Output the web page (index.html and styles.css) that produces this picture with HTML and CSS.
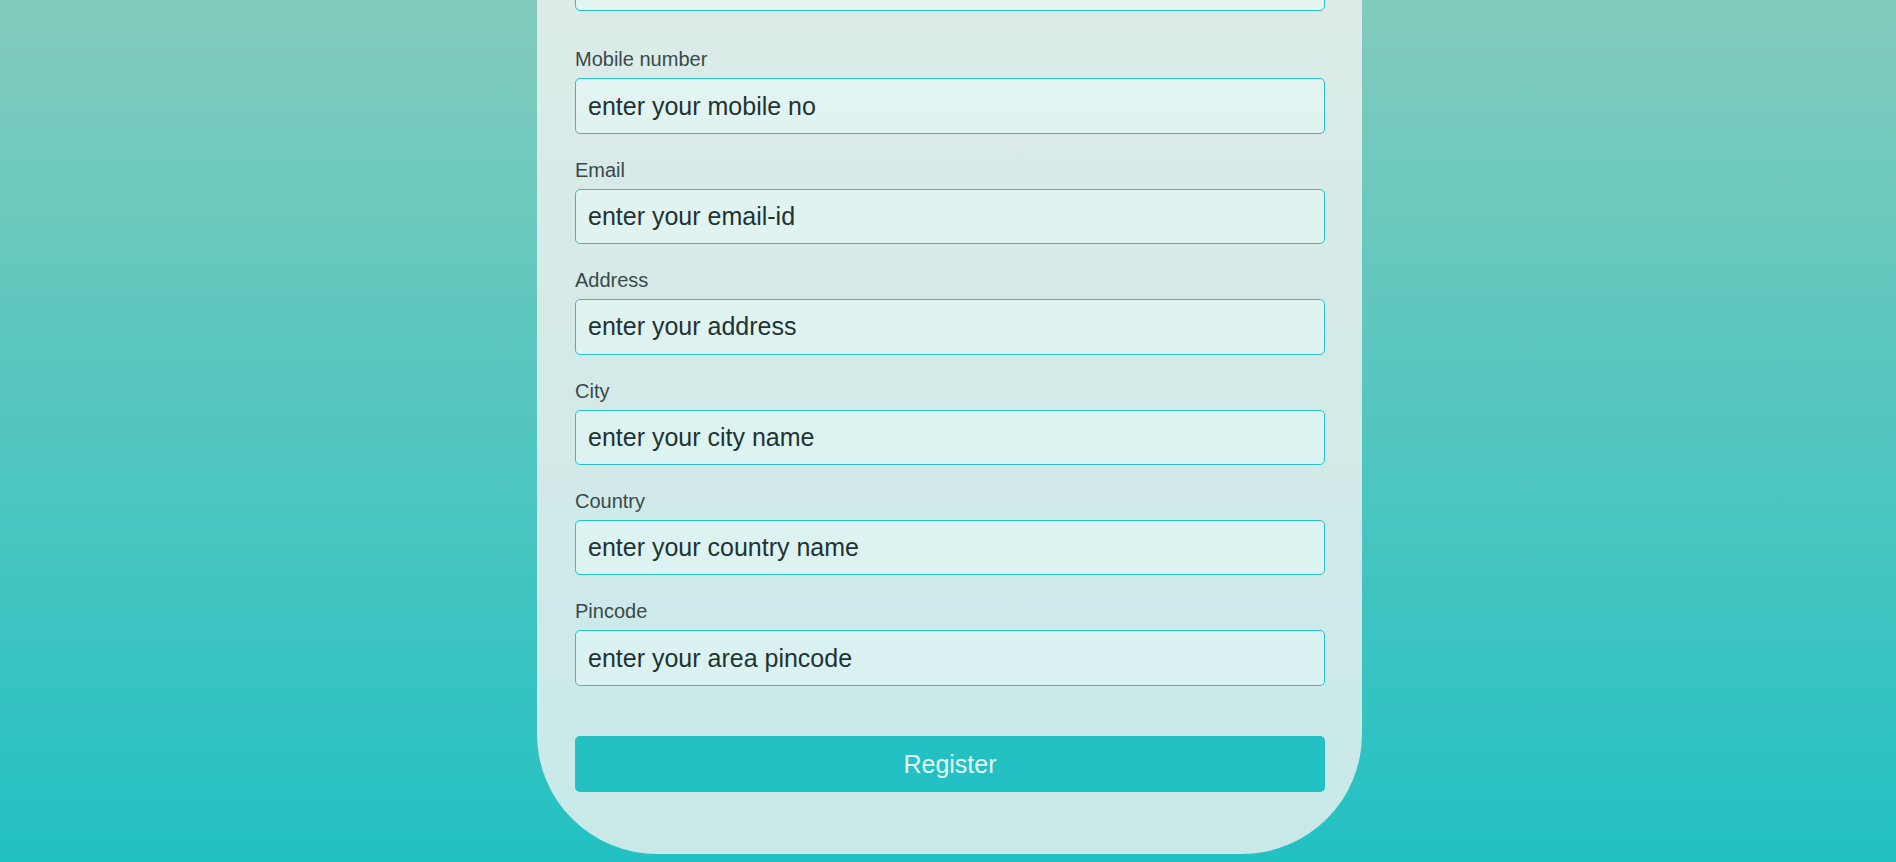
FILE: index.html
```html
<!DOCTYPE html>
<html lang="en">
<head>
<meta charset="utf-8">
<title>Register</title>
<link rel="stylesheet" href="styles.css">
</head>
<body>
  <form class="card">
    <div class="field field-first">
      <label class="label" for="name">Full name</label>
      <input class="input" id="name" type="text">
    </div>
    <div class="field">
      <label class="label" for="mobile">Mobile number</label>
      <input class="input" id="mobile" type="text" placeholder="enter your mobile no">
    </div>
    <div class="field">
      <label class="label" for="email">Email</label>
      <input class="input" id="email" type="text" placeholder="enter your email-id">
    </div>
    <div class="field">
      <label class="label" for="address">Address</label>
      <input class="input" id="address" type="text" placeholder="enter your address">
    </div>
    <div class="field">
      <label class="label" for="city">City</label>
      <input class="input" id="city" type="text" placeholder="enter your city name">
    </div>
    <div class="field">
      <label class="label" for="country">Country</label>
      <input class="input" id="country" type="text" placeholder="enter your country name">
    </div>
    <div class="field field-last">
      <label class="label" for="pincode">Pincode</label>
      <input class="input" id="pincode" type="text" placeholder="enter your area pincode">
    </div>
    <button class="btn" type="button">Register</button>
  </form>
</body>
</html>
```
FILE: styles.css
```css
html {
  height: 100%;
  background: linear-gradient(to bottom, #83cbbc 0%, #22c1c3 100%);
}

body {
  box-sizing: border-box;
  height: 100vh;
  margin: 0;
  padding: 0 8px 8px;
  font-family: "Liberation Sans", Arial, sans-serif;
  overflow: hidden;
  display: flex;
  flex-direction: column;
  justify-content: flex-end;
}

.card {
  flex-shrink: 0;
  box-sizing: border-box;
  width: 825px;
  margin-left: calc(50% - 411px);
  padding: 40px 37px 61.6px 38px;
  background: rgba(243, 243, 243, 0.8);
  border-radius: 30px 30px 120px 120px;
  display: flex;
  flex-direction: column;
}

.field {
  display: flex;
  flex-direction: column;
  margin-bottom: 25px;
}

.field-first {
  margin-bottom: 37.6px;
}

.field-last {
  margin-bottom: 50.6px;
}

.label {
  font-size: 20px;
  line-height: 23px;
  color: #3a4947;
  margin-bottom: 7px;
}

.input {
  box-sizing: border-box;
  width: 100%;
  height: 55.4px;
  padding: 0 12px;
  border: 1px solid #27c2c3;
  border-radius: 5px;
  background: rgba(235, 255, 252, 0.45);
  font-family: "Liberation Sans", Arial, sans-serif;
  font-size: 25px;
  color: #1e3432;
  outline: none;
}

.input::placeholder {
  color: #1e3432;
  opacity: 1;
}

.btn {
  box-sizing: border-box;
  width: 100%;
  height: 56px;
  border: none;
  border-radius: 5px;
  background: #23c1c3;
  color: #e4f7f5;
  font-family: "Liberation Sans", Arial, sans-serif;
  font-size: 25px;
  cursor: pointer;
}
```
